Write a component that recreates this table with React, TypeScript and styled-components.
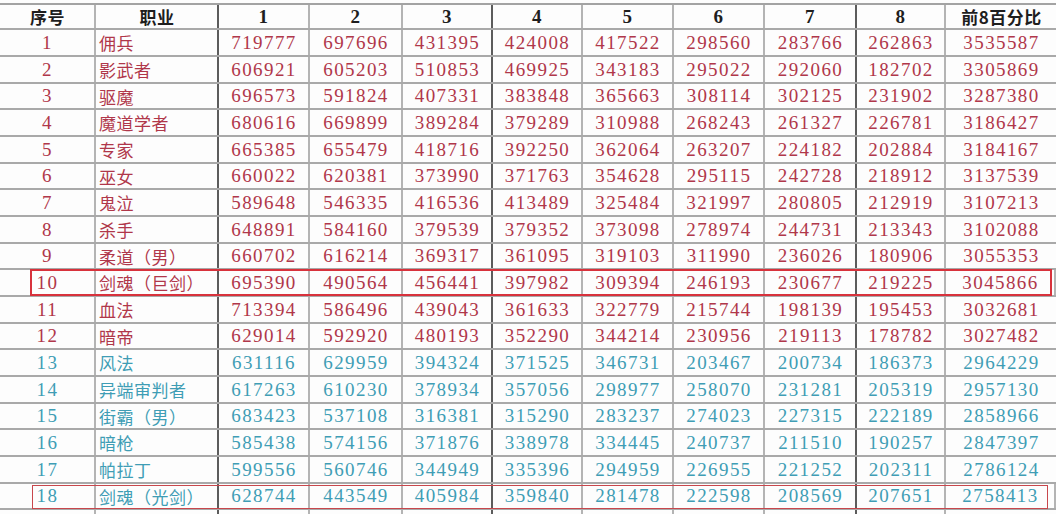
import styled, { createGlobalStyle } from "styled-components";

const GlobalStyle = createGlobalStyle`
  html, body {
    margin: 0;
    padding: 0;
    background: #fdfdfd;
    overflow: hidden;
  }
  body {
    font-family: "Liberation Serif", "Noto Sans CJK SC", serif;
  }
`;

const COLS = "96px 123px 91px 93px 90px 90px 91px 91px 92px 89px 110px";
const DARK_AFTER = [1, 4, 8];

const RED = "#b0374a";
const TEAL = "#3f9db5";

const Page = styled.div`
  width: 1056px;
  height: 514px;
  padding-top: 3px;
  box-sizing: border-box;
  overflow: hidden;
`;

const Table = styled.div`
  border-top: 2px solid #a3a3a3;
`;

const Row = styled.div<{ $height: number }>`
  position: relative;
  display: grid;
  grid-template-columns: ${COLS};
  height: ${({ $height }) => $height}px;
  box-sizing: border-box;
  border-bottom: 2px solid #a9a9a9;
`;

const Cell = styled.div<{ $dark?: boolean; $left?: boolean; $color: string; $head?: boolean }>`
  display: flex;
  align-items: center;
  justify-content: ${({ $left }) => ($left ? "flex-start" : "center")};
  padding-left: ${({ $left }) => ($left ? "3px" : "1px")};
  border-right: ${({ $dark }) => ($dark ? "2px solid #5c5c5c" : "2px solid #b4b4b4")};
  color: ${({ $color }) => $color};
  font-size: 19px;
  letter-spacing: 1.4px;
  font-weight: ${({ $head }) => ($head ? 700 : 400)};
  white-space: nowrap;
  overflow: hidden;
  &:last-child {
    border-right: none;
  }
`;

const Cjk = styled.span<{ $head?: boolean }>`
  font-family: "Noto Sans CJK SC", serif;
  font-size: ${({ $head }) => ($head ? "17px" : "17px")};
  letter-spacing: 0.5px;
  font-weight: ${({ $head }) => ($head ? 700 : 400)};
  line-height: 1;
`;

const Highlight = styled.div<{ $thick?: boolean }>`
  position: absolute;
  left: ${({ $thick }) => ($thick ? "30px" : "32px")};
  right: ${({ $thick }) => ($thick ? "4px" : "8px")};
  top: ${({ $thick }) => ($thick ? "-1px" : "1px")};
  bottom: ${({ $thick }) => ($thick ? "-1px" : "-1px")};
  border: ${({ $thick }) => ($thick ? "2px solid #d8323c" : "1px solid #c8474c")};
  pointer-events: none;
`;

type Entry = { name: string; vals: string[] };

const DATA: Entry[] = [
  { name: "佣兵", vals: ["719777", "697696", "431395", "424008", "417522", "298560", "283766", "262863", "3535587"] },
  { name: "影武者", vals: ["606921", "605203", "510853", "469925", "343183", "295022", "292060", "182702", "3305869"] },
  { name: "驱魔", vals: ["696573", "591824", "407331", "383848", "365663", "308114", "302125", "231902", "3287380"] },
  { name: "魔道学者", vals: ["680616", "669899", "389284", "379289", "310988", "268243", "261327", "226781", "3186427"] },
  { name: "专家", vals: ["665385", "655479", "418716", "392250", "362064", "263207", "224182", "202884", "3184167"] },
  { name: "巫女", vals: ["660022", "620381", "373990", "371763", "354628", "295115", "242728", "218912", "3137539"] },
  { name: "鬼泣", vals: ["589648", "546335", "416536", "413489", "325484", "321997", "280805", "212919", "3107213"] },
  { name: "杀手", vals: ["648891", "584160", "379539", "379352", "373098", "278974", "244731", "213343", "3102088"] },
  { name: "柔道（男）", vals: ["660702", "616214", "369317", "361095", "319103", "311990", "236026", "180906", "3055353"] },
  { name: "剑魂（巨剑）", vals: ["695390", "490564", "456441", "397982", "309394", "246193", "230677", "219225", "3045866"] },
  { name: "血法", vals: ["713394", "586496", "439043", "361633", "322779", "215744", "198139", "195453", "3032681"] },
  { name: "暗帝", vals: ["629014", "592920", "480193", "352290", "344214", "230956", "219113", "178782", "3027482"] },
  { name: "风法", vals: ["631116", "629959", "394324", "371525", "346731", "203467", "200734", "186373", "2964229"] },
  { name: "异端审判者", vals: ["617263", "610230", "378934", "357056", "298977", "258070", "231281", "205319", "2957130"] },
  { name: "街霸（男）", vals: ["683423", "537108", "316381", "315290", "283237", "274023", "227315", "222189", "2858966"] },
  { name: "暗枪", vals: ["585438", "574156", "371876", "338978", "334445", "240737", "211510", "190257", "2847397"] },
  { name: "帕拉丁", vals: ["599556", "560746", "344949", "335396", "294959", "226955", "221252", "202311", "2786124"] },
  { name: "剑魂（光剑）", vals: ["628744", "443549", "405984", "359840", "281478", "222598", "208569", "207651", "2758413"] },
  { name: "驱魔（女）", vals: ["572891", "531207", "351463", "342158", "290316", "231847", "219602", "198745", "2738229"] },
];

const HEAD = ["1", "2", "3", "4", "5", "6", "7", "8"];

export default function App() {
  return (
    <>
      <GlobalStyle />
      <Page>
        <Table>
          <Row $height={25}>
            <Cell $color="#1e1e1e" $head>
              <Cjk $head>序号</Cjk>
            </Cell>
            <Cell $color="#1e1e1e" $head $dark>
              <Cjk $head>职业</Cjk>
            </Cell>
            {HEAD.map((h, i) => (
              <Cell key={h} $color="#1e1e1e" $head $dark={DARK_AFTER.includes(i + 2)}>
                {h}
              </Cell>
            ))}
            <Cell $color="#1e1e1e" $head>
              <Cjk $head>前8百分比</Cjk>
            </Cell>
          </Row>
          {DATA.map((d, idx) => {
            const n = idx + 1;
            const color = n <= 12 ? RED : TEAL;
            const h = n % 3 === 0 ? 26 : 27;
            return (
              <Row key={n} $height={h}>
                <Cell $color={color}>{n}</Cell>
                <Cell $color={color} $left $dark>
                  <Cjk>{d.name}</Cjk>
                </Cell>
                {d.vals.map((v, i) => (
                  <Cell key={i} $color={color} $dark={DARK_AFTER.includes(i + 2)}>
                    {v}
                  </Cell>
                ))}
                {n === 10 && <Highlight $thick />}
                {n === 18 && <Highlight />}
              </Row>
            );
          })}
        </Table>
      </Page>
    </>
  );
}
